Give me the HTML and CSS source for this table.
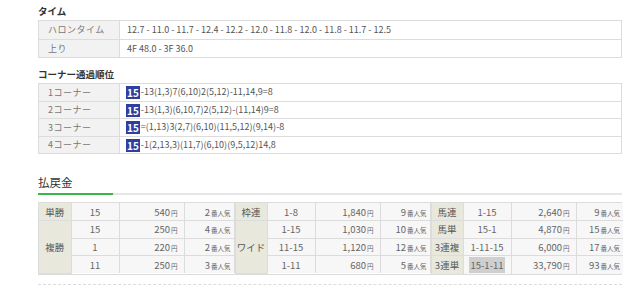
FILE: index.html
```html
<!DOCTYPE html>
<html lang="ja">
<head>
<meta charset="utf-8">
<link rel="stylesheet" href="styles.css">
</head>
<body>
<div class="page">
  <h3 class="sub-title">タイム</h3>
  <table class="info-table time-table">
    <colgroup><col class="c-label"><col></colgroup>
    <tr><th>ハロンタイム</th><td>12.7 - 11.0 - 11.7 - 12.4 - 12.2 - 12.0 - 11.8 - 12.0 - 11.8 - 11.7 - 12.5</td></tr>
    <tr><th>上り</th><td>4F 48.0 - 3F 36.0</td></tr>
  </table>

  <h3 class="sub-title corner-title">コーナー通過順位</h3>
  <table class="info-table corner-table">
    <colgroup><col class="c-label"><col></colgroup>
    <tr><th>1コーナー</th><td><span class="badge">15</span>-13(1,3)7(6,10)2(5,12)-11,14,9=8</td></tr>
    <tr><th>2コーナー</th><td><span class="badge">15</span>-13(1,3)(6,10,7)2(5,12)-(11,14)9=8</td></tr>
    <tr><th>3コーナー</th><td><span class="badge">15</span>=(1,13)3(2,7)(6,10)(11,5,12)(9,14)-8</td></tr>
    <tr><th>4コーナー</th><td><span class="badge">15</span>-1(2,13,3)(11,7)(6,10)(9,5,12)14,8</td></tr>
  </table>

  <div class="pay-head"><h2 class="pay-title">払戻金</h2></div>

  <div class="pay-wrap">
    <table class="pay-table">
      <colgroup><col class="c-th"><col class="c-num"><col class="c-yen"><col class="c-pop"></colgroup>
      <tr><th>単勝</th><td class="num">15</td><td class="yen">540<small>円</small></td><td class="pop">2<small>番人気</small></td></tr>
      <tr><th rowspan="3">複勝</th><td class="num">15</td><td class="yen">250<small>円</small></td><td class="pop">4<small>番人気</small></td></tr>
      <tr class="dash"><td class="num">1</td><td class="yen">220<small>円</small></td><td class="pop">2<small>番人気</small></td></tr>
      <tr class="dash"><td class="num">11</td><td class="yen">250<small>円</small></td><td class="pop">3<small>番人気</small></td></tr>
    </table>
    <table class="pay-table">
      <colgroup><col class="c-th"><col class="c-num"><col class="c-yen"><col class="c-pop"></colgroup>
      <tr><th>枠連</th><td class="num">1-8</td><td class="yen">1,840<small>円</small></td><td class="pop">9<small>番人気</small></td></tr>
      <tr><th rowspan="3">ワイド</th><td class="num">1-15</td><td class="yen">1,030<small>円</small></td><td class="pop">10<small>番人気</small></td></tr>
      <tr class="dash"><td class="num">11-15</td><td class="yen">1,120<small>円</small></td><td class="pop">12<small>番人気</small></td></tr>
      <tr class="dash"><td class="num">1-11</td><td class="yen">680<small>円</small></td><td class="pop">5<small>番人気</small></td></tr>
    </table>
    <table class="pay-table">
      <colgroup><col class="c-th"><col class="c-num"><col class="c-yen"><col class="c-pop"></colgroup>
      <tr><th>馬連</th><td class="num">1-15</td><td class="yen">2,640<small>円</small></td><td class="pop">9<small>番人気</small></td></tr>
      <tr><th>馬単</th><td class="num">15-1</td><td class="yen">4,870<small>円</small></td><td class="pop">15<small>番人気</small></td></tr>
      <tr><th>3連複</th><td class="num">1-11-15</td><td class="yen">6,000<small>円</small></td><td class="pop">17<small>番人気</small></td></tr>
      <tr><th>3連単</th><td class="num"><span class="hl">15-1-11</span></td><td class="yen">33,790<small>円</small></td><td class="pop">93<small>番人気</small></td></tr>
    </table>
  </div>
  <div class="dash-line"></div>
</div>
</body>
</html>
```

FILE: styles.css
```css
* { box-sizing: border-box; }
html, body { margin: 0; padding: 0; background: #fff; }
body {
  font-family: "Noto Sans CJK JP", "Noto Sans", sans-serif;
  color: #555;
}
.page {
  width: 640px;
  padding: 5px 18px 0 38px;
}
.sub-title {
  margin: 0 0 3px;
  font-size: 9.5px;
  line-height: 12px;
  font-weight: bold;
  color: #333;
}
.corner-title { margin-top: 10px; }
.info-table {
  width: 584px;
  table-layout: fixed;
  border-collapse: collapse;
  border: 1px solid #dcdcdc;
}
.info-table col.c-label { width: 81px; }
.info-table th, .info-table td {
  border: 1px solid #dcdcdc;
  font-size: 9px;
  font-weight: normal;
  text-align: left;
  padding: 0 0 0 7px;
  white-space: nowrap;
}
.info-table th {
  background: #f2f2f2;
  color: #777;
  padding-left: 9px;
  letter-spacing: 0.5px;
}
.info-table td { color: #555; }
.time-table tr { height: 18.5px; }
.corner-table tr { height: 17.5px; }
.badge {
  display: inline-block;
  background: #2e3f9f;
  color: #fff;
  font-weight: bold;
  font-size: 10px;
  line-height: 13px;
  padding: 0 1px;
  margin-right: 1px;
  vertical-align: middle;
}
.corner-table td { padding-left: 6px; }
.pay-head {
  margin-top: 14px;
  border-bottom: 2px solid #e6e6e6;
  width: 584px;
}
.pay-title {
  display: inline-block;
  margin: 0 0 -2px;
  padding: 0 0 3px;
  width: 75px;
  font-size: 11.5px;
  line-height: 16px;
  font-weight: normal;
  color: #333;
  border-bottom: 2px solid #3bb54a;
}
.pay-wrap {
  margin-top: 7px;
  width: 584px;
  display: flex;
  border: 1px solid #dcdcdc;
}
.pay-table {
  border-collapse: collapse;
  table-layout: fixed;
  flex: 0 0 auto;
  width: 195px;
}
.pay-table:nth-child(3) { width: 192px; }
.pay-table col.c-th { width: 32px; }
.pay-table col.c-num { width: 48px; }
.pay-table col.c-yen { width: 65px; }
.pay-table col.c-pop { width: 50px; }
.pay-table:nth-child(3) col.c-pop { width: 47px; }
.pay-table tr { height: 17.5px; }
.pay-table th, .pay-table td {
  border: 1px solid #dcdcdc;
  font-size: 9.5px;
  font-weight: normal;
  padding: 0;
  white-space: nowrap;
  background: #f7f7f7;
  color: #666;
}
.pay-table tr:first-child th, .pay-table tr:first-child td { border-top: 0; }
.pay-table tr:last-child th, .pay-table tr:last-child td { border-bottom: 0; }
.pay-table:first-child th { border-left: 0; }
.pay-table:last-child td.pop { border-right: 0; }
.pay-table th {
  background: #e8e8dc;
  color: #555;
  text-align: center;
}
.pay-table td.num { text-align: center; }
.pay-table td.yen { text-align: right; padding-right: 6px; }
.pay-table td.pop { text-align: right; padding-right: 3px; }
.pay-table tr.dash td { border-top: 1px dashed #d0d0d0; }
.pay-table small { font-size: 6.5px; margin-left: 1px; }
.hl { background: #cfcfcf; padding: 1px 2px; }
.dash-line {
  margin-top: 9px;
  width: 584px;
  border-top: 1px dashed #dcdcdc;
}
```
